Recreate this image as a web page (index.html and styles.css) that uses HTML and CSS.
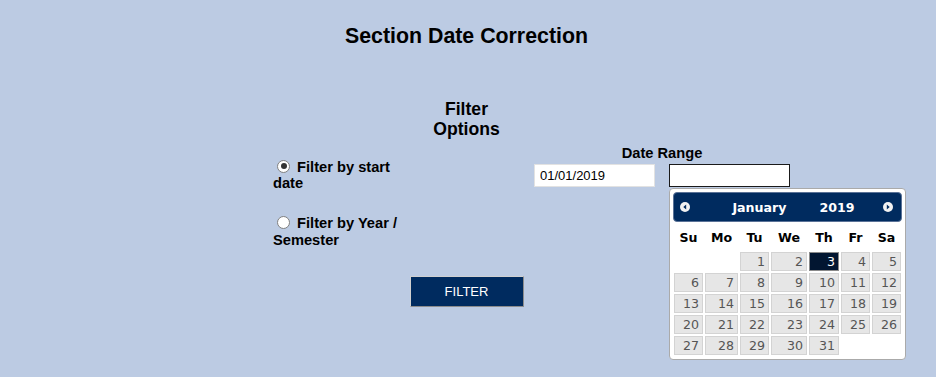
FILE: index.html
```html
<!DOCTYPE html>
<html lang="en">
<head>
  <meta charset="UTF-8">
  <title>Section Date Correction</title>
  <link rel="stylesheet" href="styles.css">
</head>
<body>
  <div class="page">
    <h1 class="page-title">Section Date Correction</h1>
    <h2 class="filter-title">Filter Options</h2>

    <div class="filter-row">
      <!-- Filter mode -->
      <div class="modes">
        <label class="mode"><input type="radio" name="mode" checked> Filter by start date</label>
        <label class="mode"><input type="radio" name="mode"> Filter by Year / Semester</label>
      </div>

      <!-- Date range -->
      <div class="date-range">
        <div class="date-label">Date Range</div>
        <div class="date-inputs">
          <input type="text" class="date-input" value="01/01/2019">
          <div class="date-end">
            <input type="text" class="date-input focused">

            <div class="datepicker">
              <div class="dp-header">
                <svg class="dp-nav" width="10" height="10" viewBox="0 0 10 10"><circle cx="5" cy="5" r="5" fill="#f2f2f2"/><path d="M6.2 2.4 L3.3 5 L6.2 7.6 Z" fill="#002b5f"/></svg>
                <div class="dp-title"><span>January</span><span>2019</span></div>
                <svg class="dp-nav next" width="10" height="10" viewBox="0 0 10 10"><circle cx="5" cy="5" r="5" fill="#f2f2f2"/><path d="M3.8 2.4 L6.7 5 L3.8 7.6 Z" fill="#002b5f"/></svg>
              </div>
              <table class="dp-table">
                <thead>
                  <tr><th>Su</th><th>Mo</th><th>Tu</th><th>We</th><th>Th</th><th>Fr</th><th>Sa</th></tr>
                </thead>
                <tbody>
                  <tr><td></td><td></td><td><a>1</a></td><td><a>2</a></td><td><a class="active">3</a></td><td><a>4</a></td><td><a>5</a></td></tr>
                  <tr><td><a>6</a></td><td><a>7</a></td><td><a>8</a></td><td><a>9</a></td><td><a>10</a></td><td><a>11</a></td><td><a>12</a></td></tr>
                  <tr><td><a>13</a></td><td><a>14</a></td><td><a>15</a></td><td><a>16</a></td><td><a>17</a></td><td><a>18</a></td><td><a>19</a></td></tr>
                  <tr><td><a>20</a></td><td><a>21</a></td><td><a>22</a></td><td><a>23</a></td><td><a>24</a></td><td><a>25</a></td><td><a>26</a></td></tr>
                  <tr><td><a>27</a></td><td><a>28</a></td><td><a>29</a></td><td><a>30</a></td><td><a>31</a></td><td></td><td></td></tr>
                </tbody>
              </table>
            </div>
          </div>
        </div>
      </div>
    </div>

    <div class="actions">
      <button class="filter-btn">FILTER</button>
    </div>
  </div>
</body>
</html>
```

FILE: styles.css
```css
body {
  margin: 8px;
  background-color: #bccbe3;
  font-family: "Liberation Sans", Arial, sans-serif;
  color: #000;
}
.page {
  padding-right: 3px;
  min-height: 361px;
}
.page-title {
  margin: 16px 0 0;
  text-align: center;
  font-size: 21.33px;
  line-height: 24.5px;
  font-weight: bold;
}
.filter-title {
  width: 80px;
  margin: 50px auto 0;
  text-align: center;
  font-size: 17.6px;
  line-height: 20.2px;
  font-weight: bold;
}

/* Filter options row */
.filter-row {
  display: flex;
  margin: 5.7px 0 0 265px;
}
.modes {
  width: 130px;
  padding-top: 12px;
  display: flex;
  flex-direction: column;
  gap: 21px;
}
.mode {
  display: block;
  font-size: 14.67px;
  line-height: 16.86px;
  font-weight: bold;
}
.mode input {
  appearance: none;
  -webkit-appearance: none;
  display: inline-block;
  box-sizing: border-box;
  width: 13px;
  height: 13px;
  margin: 3px 3px 0 4px;
  border: 1px solid #808080;
  border-radius: 50%;
  background: #fff;
  vertical-align: -1px;
  position: relative;
}
.mode input:checked::after {
  content: "";
  position: absolute;
  left: 2.5px;
  top: 2.5px;
  width: 6px;
  height: 6px;
  border-radius: 50%;
  background: #333;
}

.date-range {
  margin-left: 131px;
  width: 256px;
}
.date-label {
  text-align: center;
  font-size: 14.67px;
  line-height: 16.86px;
  font-weight: bold;
  margin-bottom: 2.4px;
}
.date-inputs {
  display: flex;
  gap: 14px;
}
.date-input {
  box-sizing: border-box;
  width: 121px;
  height: 23.5px;
  margin: 0;
  padding: 0 5px;
  border: 1px solid #e2e2e2;
  background: #fff;
  font-family: "Liberation Sans", Arial, sans-serif;
  font-size: 13px;
  color: #000;
  outline: none;
}
.date-input.focused {
  border-color: #1a1a1a;
}
.date-end {
  position: relative;
}

/* Datepicker popup */
.datepicker {
  position: absolute;
  left: 0;
  top: calc(100% + 1px);
  width: 237px;
  box-sizing: border-box;
  padding: 3px;
  background: #fff;
  border: 1px solid #aaa;
  border-radius: 4px;
  font-family: "DejaVu Sans", Verdana, sans-serif;
  z-index: 10;
}
.dp-header {
  display: flex;
  align-items: center;
  height: 30px;
  box-sizing: border-box;
  background: #002b5f;
  border: 1px solid #5a7297;
  border-radius: 4px;
}
.dp-nav {
  margin-left: 6px;
  flex: none;
}
.dp-nav.next {
  margin-left: 0;
  margin-right: 8px;
}
.dp-title {
  flex: 1;
  display: flex;
  justify-content: center;
  gap: 33px;
  padding-left: 14px;
  color: #fff;
  font-size: 12.6px;
  font-weight: bold;
}
.dp-table {
  width: 100%;
  border-collapse: collapse;
  table-layout: fixed;
  font-size: 12.6px;
  margin: 0;
}
.dp-table th {
  height: 29px;
  padding: 2px 0 0;
  box-sizing: border-box;
  text-align: center;
  font-weight: bold;
}
.dp-table th:nth-child(1) { width: 31px; }
.dp-table th:nth-child(2) { width: 35px; }
.dp-table th:nth-child(3) { width: 31px; }
.dp-table th:nth-child(4) { width: 38px; }
.dp-table th:nth-child(5) { width: 32px; }
.dp-table th:nth-child(6) { width: 31px; }
.dp-table th:nth-child(7) { width: 31px; }
.dp-table td {
  padding: 1px;
}
.dp-table td a {
  display: block;
  height: 17px;
  line-height: 17px;
  padding: 0 3px;
  border: 1px solid #d3d3d3;
  background: #e6e6e6;
  color: #555;
  text-align: right;
}
.dp-table td a.active {
  background: #021631;
  border-color: #8a8a8a;
  color: #fff;
}

.actions {
  margin-top: 26.5px;
  text-align: center;
}
.filter-btn {
  box-sizing: border-box;
  width: 114px;
  height: 31px;
  background-color: #002b5f;
  color: #fff;
  border: 1px solid;
  border-color: #d0d0d0 #8c8c8c #8c8c8c #d0d0d0;
  font-family: "Liberation Sans", Arial, sans-serif;
  font-size: 13px;
  cursor: pointer;
}
```
